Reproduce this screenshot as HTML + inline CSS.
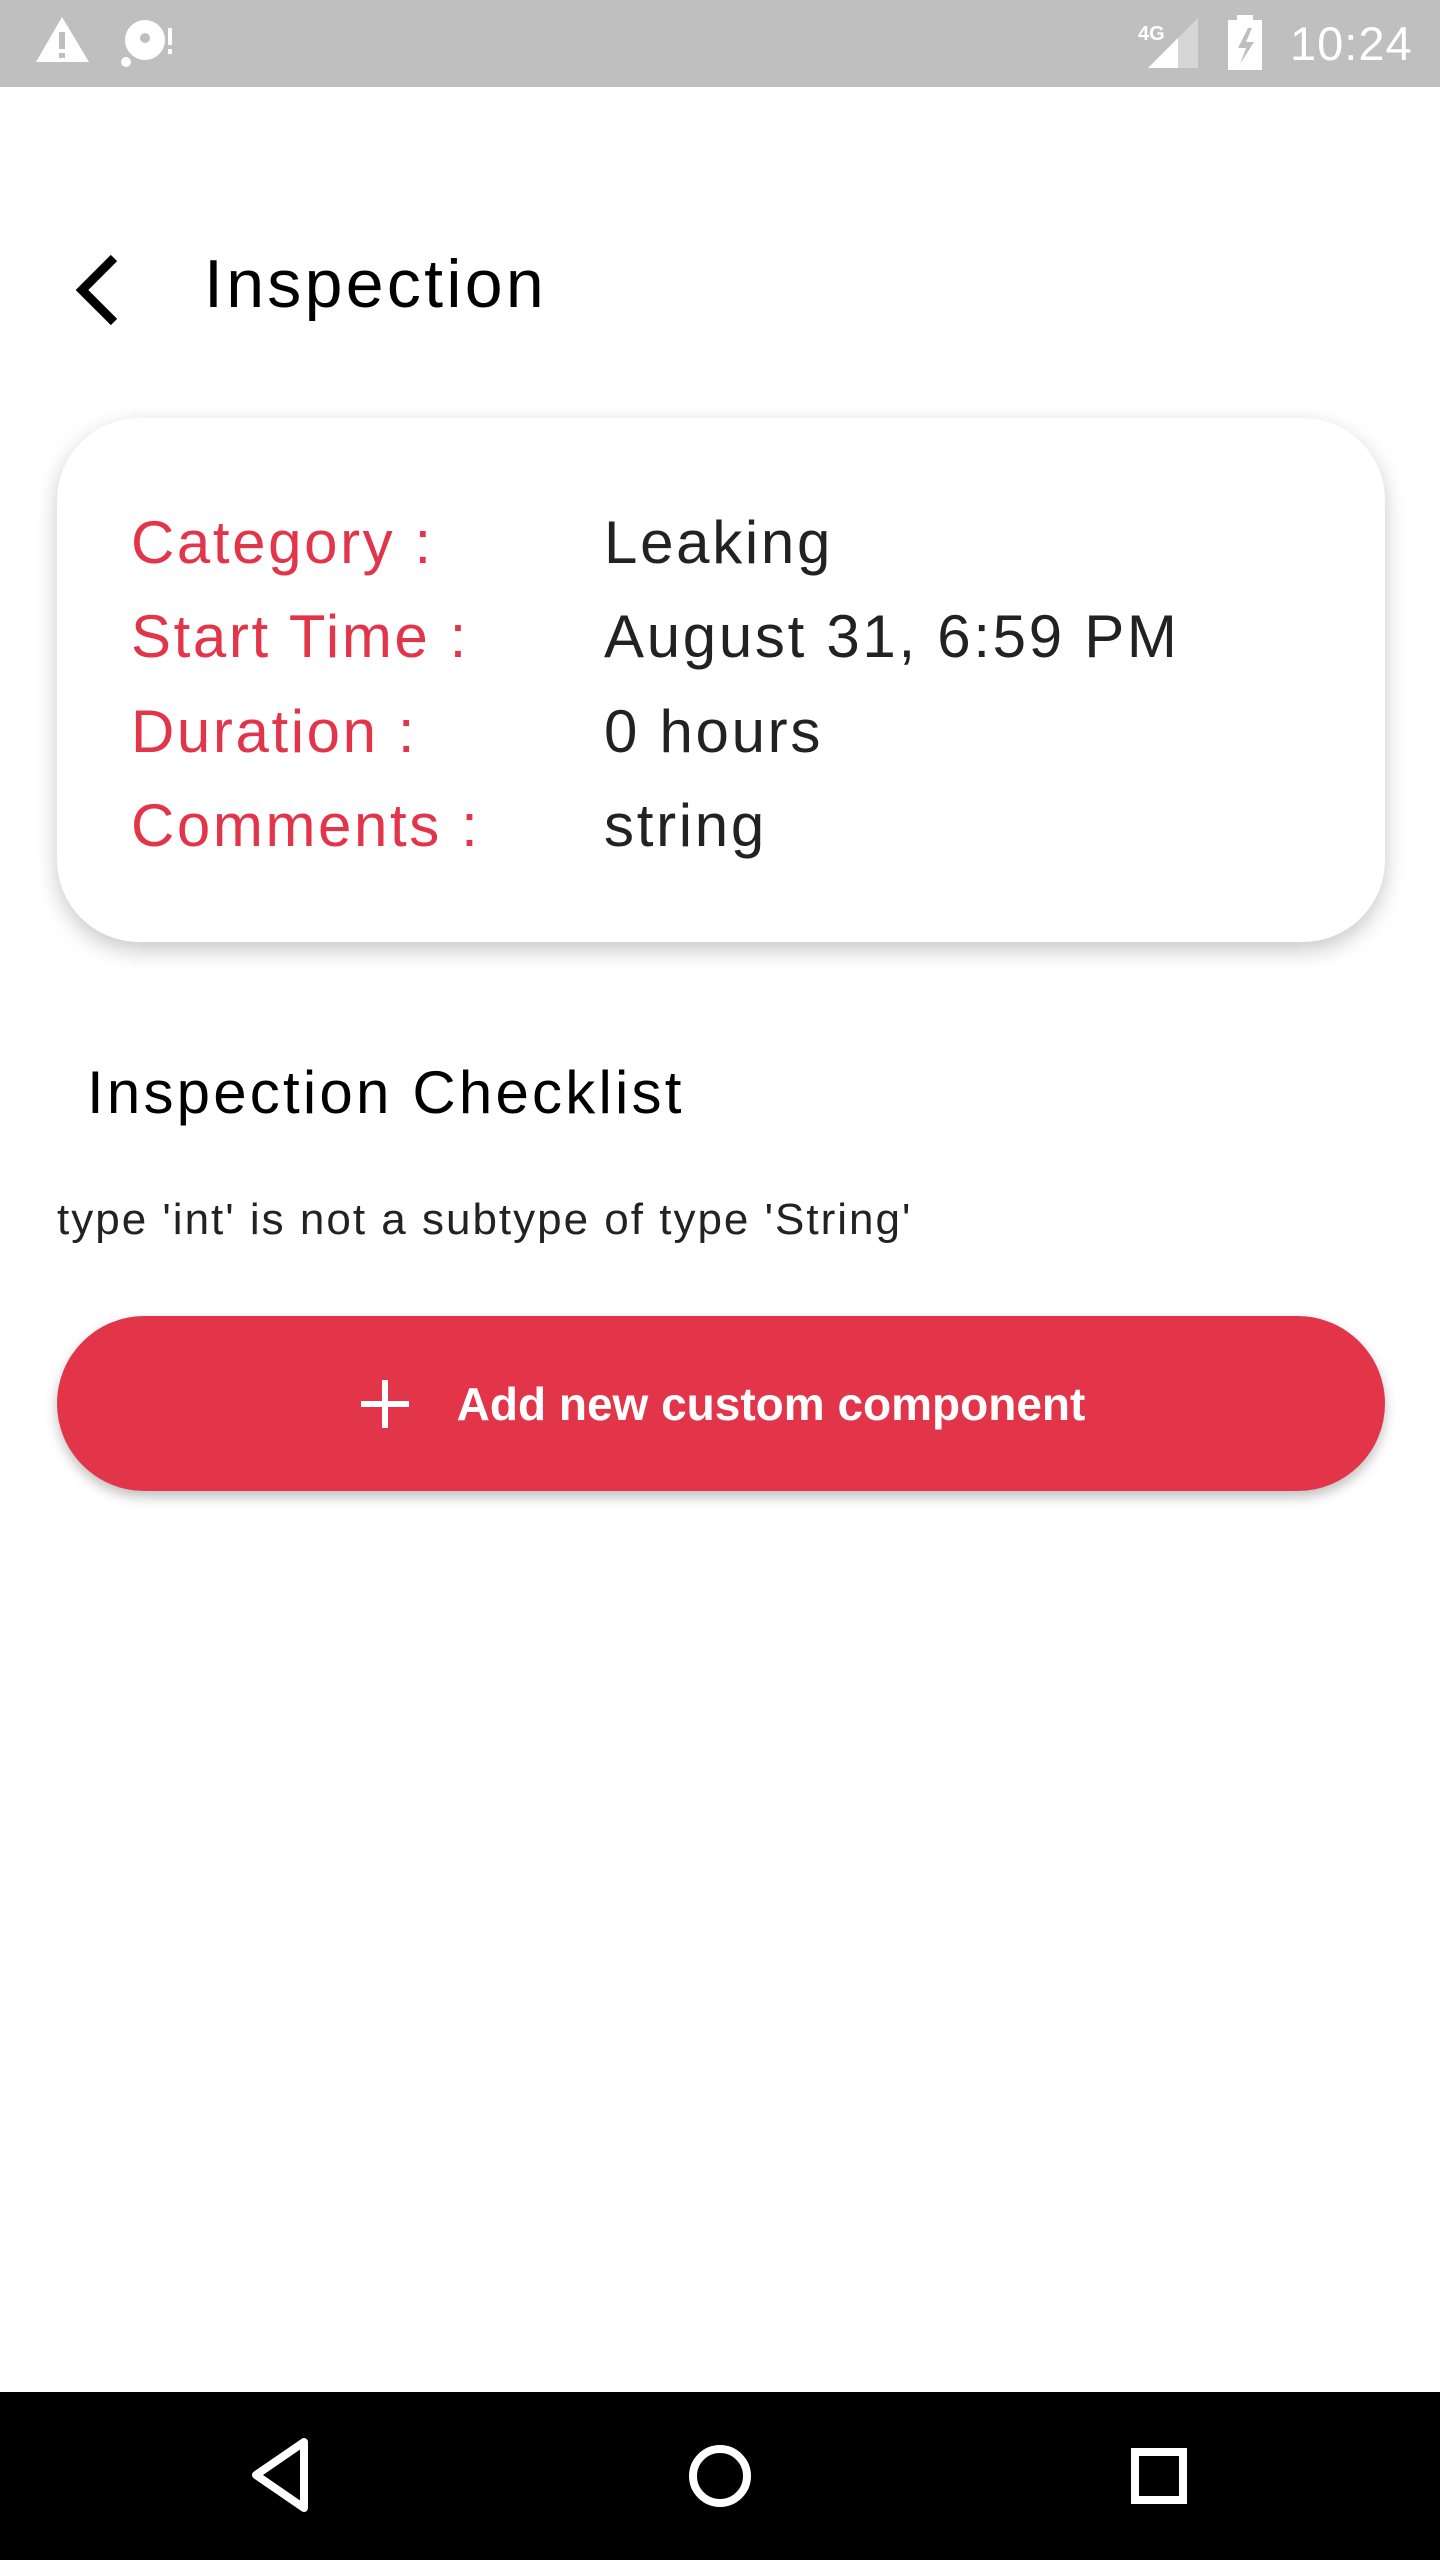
<!DOCTYPE html>
<html><head><meta charset="utf-8"><style>
body{margin:0;width:1440px;height:2560px;position:relative;background:#fff;font-family:"Liberation Sans",sans-serif;overflow:hidden}
.a{position:absolute;line-height:1;white-space:nowrap}
.sb{position:absolute;left:0;top:0;width:1440px;height:87px;background:#bfbfbf}
.card{position:absolute;left:57px;top:418px;width:1328px;height:524px;border-radius:82px;background:#fff;box-shadow:0 8px 22px rgba(0,0,0,.22)}
.l{color:#e3354a;font-size:60px;left:131px;letter-spacing:2.6px}
.v{color:#222;font-size:60px;left:604px;letter-spacing:2.7px}
.btn{position:absolute;left:57px;top:1316px;width:1328px;height:175px;border-radius:88px;background:#e3354a;box-shadow:0 6px 12px rgba(0,0,0,.25);display:flex;align-items:center;justify-content:center;color:#fff;font-weight:bold;font-size:46px}
.nav{position:absolute;left:0;top:2392px;width:1440px;height:168px;background:#000}
</style></head><body>
<div class="sb">
<svg width="1440" height="87" style="position:absolute;left:0;top:0">
<polygon points="62,17 36,62 89,62" fill="#fff"/><rect x="59" y="32" width="6" height="17" fill="#bfbfbf"/><rect x="59" y="53" width="6" height="5" fill="#bfbfbf"/>
<circle cx="145" cy="40" r="20" fill="#fff"/><circle cx="145" cy="38" r="5" fill="#bfbfbf"/><circle cx="126" cy="62" r="5" fill="#fff"/><rect x="168" y="28" width="4" height="17" fill="#fff"/><rect x="168" y="49" width="4" height="5" fill="#fff"/>
<text x="1138" y="40" font-size="20" fill="#fff" font-family="Liberation Sans" font-weight="bold">4G</text>
<polygon points="1148,68 1198,18 1198,68" fill="#d6d6d6"/><polygon points="1148,68 1178,38 1178,68" fill="#fff"/>
<rect x="1228" y="20" width="34" height="50" fill="#fff"/><rect x="1237" y="15" width="16" height="6" fill="#fff"/><polygon points="1248,28 1238,48 1246,48 1240,64 1254,42 1246,42 1252,28" fill="#bfbfbf"/>
<text x="1290" y="60" font-size="47" fill="#fff" font-family="Liberation Sans" letter-spacing="1">10:24</text>
</svg></div>
<svg width="60" height="80" style="position:absolute;left:68px;top:250px"><polyline points="46,8 14,40 46,72" fill="none" stroke="#000" stroke-width="9"/></svg>
<div class="a" style="left:204px;top:250px;font-size:68px;color:#000;letter-spacing:3.3px">Inspection</div>
<div class="card"></div>
<div class="a l" style="top:513px">Category :</div><div class="a v" style="top:513px">Leaking</div>
<div class="a l" style="top:607px">Start Time :</div><div class="a v" style="top:607px">August 31, 6:59 PM</div>
<div class="a l" style="top:702px">Duration :</div><div class="a v" style="top:702px">0 hours</div>
<div class="a l" style="top:796px">Comments :</div><div class="a v" style="top:796px">string</div>
<div class="a" style="left:87px;top:1063px;font-size:60px;color:#000;letter-spacing:3.2px">Inspection Checklist</div>
<div class="a" style="left:57px;top:1198px;font-size:44px;color:#222;letter-spacing:2px">type 'int' is not a subtype of type 'String'</div>
<div class="btn"><svg width="56" height="56" style="margin-right:44px"><path d="M28 4V52M4 28H52" stroke="#fff" stroke-width="6"/></svg>Add new custom component</div>
<div class="nav"><svg width="1440" height="168">
<polygon points="304,50 304,116 256,83" fill="none" stroke="#fff" stroke-width="8" stroke-linejoin="round"/>
<circle cx="720" cy="84" r="27" fill="none" stroke="#fff" stroke-width="8"/>
<rect x="1135" y="60" width="48" height="48" fill="none" stroke="#fff" stroke-width="8"/>
</svg></div>
</body></html>
